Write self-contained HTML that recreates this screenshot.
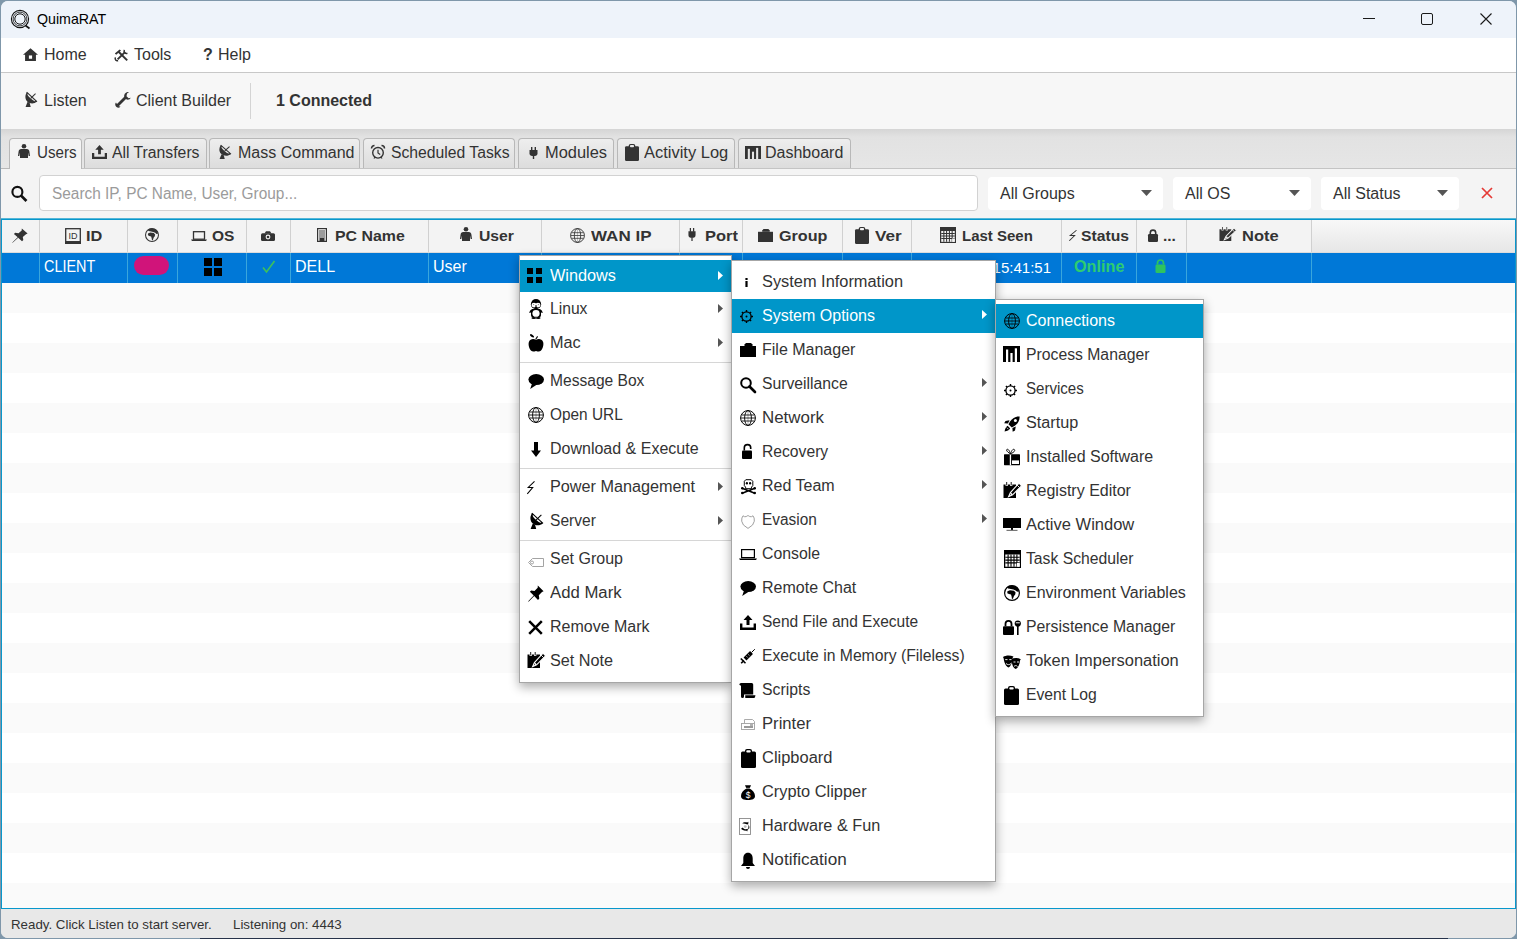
<!DOCTYPE html>
<html><head><meta charset="utf-8">
<style>
*{box-sizing:border-box;margin:0;padding:0}
html,body{width:1517px;height:939px;overflow:hidden;background:#7f97aa;font-family:"Liberation Sans",sans-serif;color:#333}
.a{position:absolute}
#win{position:absolute;left:0;top:0;width:1517px;height:939px;background:#f4f4f4;clip-path:inset(1px 1px 1px 1px round 7px)}
.t{position:absolute;white-space:nowrap;font-size:16px;line-height:1}
svg{position:absolute;overflow:visible}
</style></head><body>
<div class="a" style="left:200px;top:938px;width:1248px;height:1px;background:#26324a"></div>
<div id="win">
<div class="a" style="left:0px;top:0px;width:1517px;height:38px;background:#eef3fa"></div>
<svg style="left:10px;top:9px;" width="20" height="20" viewBox="0 0 20 20"><circle cx="10" cy="10" r="8.6" fill="none" stroke="#111" stroke-width="1.1"/><circle cx="10" cy="10" r="6.9" fill="none" stroke="#111" stroke-width="0.8"/><circle cx="10" cy="10" r="5.2" fill="none" stroke="#111" stroke-width="1"/><path d="M15.5 16.5L19.5 19.5" stroke="#111" stroke-width="1.6"/></svg>
<div class="t" style="left:37px;top:12.23px;font-size:14.2px;color:#000">QuimaRAT</div>
<div class="a" style="left:1363px;top:18px;width:12px;height:1px;background:#1a1a1a"></div>
<div class="a" style="left:1421px;top:13px;width:12px;height:12px;border:1.2px solid #1a1a1a;border-radius:2px"></div>
<svg style="left:1480px;top:13px;" width="12" height="12" viewBox="0 0 12 12"><path d="M0.5 0.5L11.5 11.5M11.5 0.5L0.5 11.5" stroke="#1a1a1a" stroke-width="1.1"/></svg>
<div class="a" style="left:0px;top:38px;width:1517px;height:34px;background:#fff"></div>
<div class="a" style="left:0px;top:72px;width:1517px;height:1px;background:#c8c8c8"></div>
<svg style="left:23px;top:48px" width="15" height="13" viewBox="0 0 16 14" preserveAspectRatio="none"><path d="M8 0.3L0 7.3h2.2V14h11.6V7.3H16z" fill="#333"/><rect x="6.3" y="8" width="3.4" height="3.6" fill="#fff"/></svg>
<div class="t" style="left:44px;top:47.0px;font-size:16px">Home</div>
<svg style="left:114px;top:49px" width="14" height="12" viewBox="0 0 14 12" preserveAspectRatio="none"><path d="M0.8 4.6L5.6 0.4 7 1.6 2.2 5.8z" fill="#333"/><path d="M4.6 2.8L13.2 11.4" stroke="#333" stroke-width="2"/><path d="M11.2 2.8L3.6 10.4" stroke="#333" stroke-width="1.9"/><path d="M10.4 0.9a2.4 2.4 0 0 0 3 3.4" stroke="#333" stroke-width="1.5" fill="none"/><path d="M1.5 8.4a2.2 2.2 0 0 0 2.6 3.2" stroke="#333" stroke-width="1.5" fill="none"/></svg>
<div class="t" style="left:134px;top:47.0px;font-size:16px">Tools</div>
<div class="t" style="left:203px;top:47.0px;font-size:16px;color:#333;font-weight:bold">?</div>
<div class="t" style="left:218px;top:47.0px;font-size:16px">Help</div>
<div class="a" style="left:0px;top:73px;width:1517px;height:56px;background:#f7f7f7"></div>
<svg style="left:25px;top:92px" width="12" height="15" viewBox="0 0 13 16" preserveAspectRatio="none"><path d="M2 0.3C-0.8 4.3 0 9.8 4.8 11.8 7.8 12.9 10.8 12.2 12.9 10.2z" fill="#333"/><ellipse cx="7" cy="5.7" rx="5.6" ry="1.5" transform="rotate(43 7 5.7)" fill="#f7f7f7"/><path d="M1.8 0.2L13 10.4" stroke="#333" stroke-width="1.1"/><path d="M6.2 6.8L11.4 1.8" stroke="#333" stroke-width="1.1"/><path d="M2.8 10.5L0.6 16h5.6L5 11.5" fill="#333"/></svg>
<div class="t" style="left:44px;top:93.0px;font-size:16px">Listen</div>
<svg style="left:115px;top:92px" width="16" height="16" viewBox="0 0 16 16" preserveAspectRatio="none"><path d="M2.5 13.5L10.5 5.5" stroke="#333" stroke-width="2.8"/><path d="M9.2 3.2a3.8 3.8 0 0 0 3.6 4.6 3.6 3.6 0 0 0 3-2L13.6 6.2 11.5 4.2 12 1.4 14 .2a3.8 3.8 0 0 0-4.8 3z" fill="#333"/><path d="M1 10.5a3 3 0 0 0 .5 4.5 3 3 0 0 0 4-.5l-1.8-.2-1.3-1.6z" fill="#333"/></svg>
<div class="t" style="left:136px;top:93.0px;font-size:16px">Client Builder</div>
<div class="a" style="left:250px;top:83px;width:1px;height:36px;background:#d4d4d4"></div>
<div class="t" style="left:276px;top:93.0px;font-size:16px;color:#333;font-weight:bold">1 Connected</div>
<div class="a" style="left:0px;top:129px;width:1517px;height:40px;background:linear-gradient(#d5d5d5 0px,#e2e2e2 8px,#e6e6e6 100%)"></div>
<div class="a" style="left:9px;top:138px;width:73px;height:31px;background:#f4f4f4;border:1px solid #b8b8b8;border-bottom:none;border-radius:4px 4px 0 0"></div>
<div class="t" style="left:37px;top:145.0px;font-size:16px;transform:scaleX(0.9454);transform-origin:0 0">Users</div>
<div class="a" style="left:84px;top:138px;width:123px;height:31px;background:linear-gradient(#eeeeee,#dcdcdc);border:1px solid #b8b8b8;border-bottom:none;border-radius:4px 4px 0 0"></div>
<div class="t" style="left:112px;top:145.0px;font-size:16px;transform:scaleX(0.9840);transform-origin:0 0">All Transfers</div>
<div class="a" style="left:209px;top:138px;width:151px;height:31px;background:linear-gradient(#eeeeee,#dcdcdc);border:1px solid #b8b8b8;border-bottom:none;border-radius:4px 4px 0 0"></div>
<div class="t" style="left:238px;top:145.0px;font-size:16px">Mass Command</div>
<div class="a" style="left:363px;top:138px;width:152px;height:31px;background:linear-gradient(#eeeeee,#dcdcdc);border:1px solid #b8b8b8;border-bottom:none;border-radius:4px 4px 0 0"></div>
<div class="t" style="left:391px;top:145.0px;font-size:16px;transform:scaleX(0.9820);transform-origin:0 0">Scheduled Tasks</div>
<div class="a" style="left:518px;top:138px;width:96px;height:31px;background:linear-gradient(#eeeeee,#dcdcdc);border:1px solid #b8b8b8;border-bottom:none;border-radius:4px 4px 0 0"></div>
<div class="t" style="left:545px;top:145.0px;font-size:16px;transform:scaleX(1.0251);transform-origin:0 0">Modules</div>
<div class="a" style="left:617px;top:138px;width:118px;height:31px;background:linear-gradient(#eeeeee,#dcdcdc);border:1px solid #b8b8b8;border-bottom:none;border-radius:4px 4px 0 0"></div>
<div class="t" style="left:644px;top:145.0px;font-size:16px;transform:scaleX(1.0292);transform-origin:0 0">Activity Log</div>
<div class="a" style="left:738px;top:138px;width:113px;height:31px;background:linear-gradient(#eeeeee,#dcdcdc);border:1px solid #b8b8b8;border-bottom:none;border-radius:4px 4px 0 0"></div>
<div class="t" style="left:765px;top:145.0px;font-size:16px">Dashboard</div>
<div class="a" style="left:0px;top:168px;width:9px;height:1px;background:#b8b8b8"></div>
<div class="a" style="left:82px;top:168px;width:1435px;height:1px;background:#c4c4c4"></div>
<svg style="left:18px;top:144px" width="12" height="14" viewBox="0 0 12 14" preserveAspectRatio="none"><circle cx="6" cy="2.3" r="2.3" fill="#333"/><path d="M3.2 5h5.6c1.6 0 2.4 1 2.6 2.5L12 12h-1.3l-.7-3.5V14H2V8.5L1.3 12H0l.6-4.5C.8 6 1.6 5 3.2 5z" fill="#333"/></svg>
<svg style="left:92px;top:145px" width="15" height="14" viewBox="0 0 16 15" preserveAspectRatio="none"><path d="M8 0L3.5 5h3v5h3V5h3z" fill="#333"/><path d="M1.2 8.5v5.3h13.6V8.5" stroke="#333" stroke-width="2.4" fill="none"/></svg>
<svg style="left:219px;top:145px" width="12" height="14" viewBox="0 0 13 16" preserveAspectRatio="none"><path d="M2 0.3C-0.8 4.3 0 9.8 4.8 11.8 7.8 12.9 10.8 12.2 12.9 10.2z" fill="#333"/><ellipse cx="7" cy="5.7" rx="5.6" ry="1.5" transform="rotate(43 7 5.7)" fill="#e6e6e6"/><path d="M1.8 0.2L13 10.4" stroke="#333" stroke-width="1.1"/><path d="M6.2 6.8L11.4 1.8" stroke="#333" stroke-width="1.1"/><path d="M2.8 10.5L0.6 16h5.6L5 11.5" fill="#333"/></svg>
<svg style="left:371px;top:145px" width="14" height="14" viewBox="0 0 14 14" preserveAspectRatio="none"><circle cx="7" cy="7.8" r="5.3" fill="none" stroke="#333" stroke-width="1.4"/><path d="M7 4.8V8l2.2 1.5" stroke="#333" stroke-width="1.2" fill="none"/><path d="M0.5 3.5a3 3 0 0 1 3-3M13.5 3.5a3 3 0 0 0-3-3" stroke="#333" stroke-width="1.5" fill="none"/><path d="M3 13.5l1-1.5M11 13.5l-1-1.5" stroke="#333" stroke-width="1.2"/></svg>
<svg style="left:529px;top:147px" width="9" height="12" viewBox="0 0 9 12" preserveAspectRatio="none"><rect x="2" y="0" width="1.4" height="3.5" fill="#333"/><rect x="5.6" y="0" width="1.4" height="3.5" fill="#333"/><path d="M0.5 3h8v3.5c0 1.6-1.1 2.5-2.6 2.5H3.1C1.6 9 .5 8.1.5 6.5z" fill="#333"/><rect x="3.8" y="8.5" width="1.4" height="3.5" fill="#333"/></svg>
<svg style="left:625px;top:144px" width="14" height="17" viewBox="0 0 15 19" preserveAspectRatio="none"><rect x="0" y="2.5" width="15" height="16.5" rx="1.5" fill="#333"/><path d="M4 4V2a2 2 0 0 1 2-2h3a2 2 0 0 1 2 2v2z" fill="#333"/><rect x="5.3" y="1.2" width="4.4" height="2.3" rx="1" fill="#e6e6e6"/></svg>
<svg style="left:745px;top:146px" width="16" height="13" viewBox="0 0 17 16" preserveAspectRatio="none"><rect x="0" y="0" width="17" height="16" fill="#333"/><rect x="3" y="3.5" width="2.2" height="12.5" fill="#e6e6e6"/><rect x="7.4" y="7" width="2.2" height="9" fill="#e6e6e6"/><rect x="11.8" y="2.3" width="2.2" height="13.7" fill="#e6e6e6"/></svg>
<svg style="left:10px;top:185px;" width="18" height="17" viewBox="0 0 16 16"><circle cx="6.5" cy="6.5" r="4.7" fill="none" stroke="#111" stroke-width="2"/><path d="M10 10l5 5" stroke="#111" stroke-width="2.6"/></svg>
<div class="a" style="left:39px;top:175px;width:939px;height:36px;background:#fff;border:1px solid #d2d2d2;border-radius:4px"></div>
<div class="t" style="left:52px;top:186.0px;font-size:16px;color:#9b9b9b;transform:scaleX(0.9619);transform-origin:0 0">Search IP, PC Name, User, Group...</div>
<div class="a" style="left:988px;top:177px;width:175px;height:33px;background:#fff;border-radius:4px"></div>
<div class="t" style="left:1000px;top:186.0px;font-size:16px;color:#333">All Groups</div>
<svg style="left:1141px;top:190px;" width="11" height="6" viewBox="0 0 11 6"><path d="M0 0h11L5.5 6z" fill="#555"/></svg>
<div class="a" style="left:1173px;top:177px;width:138px;height:33px;background:#fff;border-radius:4px"></div>
<div class="t" style="left:1185px;top:186.0px;font-size:16px;color:#333">All OS</div>
<svg style="left:1289px;top:190px;" width="11" height="6" viewBox="0 0 11 6"><path d="M0 0h11L5.5 6z" fill="#555"/></svg>
<div class="a" style="left:1321px;top:177px;width:138px;height:33px;background:#fff;border-radius:4px"></div>
<div class="t" style="left:1333px;top:186.0px;font-size:16px;color:#333">All Status</div>
<svg style="left:1437px;top:190px;" width="11" height="6" viewBox="0 0 11 6"><path d="M0 0h11L5.5 6z" fill="#555"/></svg>
<svg style="left:1481px;top:187px;" width="12" height="12" viewBox="0 0 12 12"><path d="M1 1L11 11M11 1L1 11" stroke="#e53935" stroke-width="1.7"/></svg>
<div class="a" style="left:1px;top:219px;width:1515px;height:690px;background:#fff;border:1px solid #0797cc;box-shadow:0 -1px 0 0 rgba(3,150,201,0.55), 0 0 0 1px rgba(3,150,201,0.25)"></div>
<div class="a" style="left:2px;top:220px;width:1513px;height:33px;background:#f3f3f3"></div>
<div class="a" style="left:1311px;top:220px;width:204px;height:33px;background:linear-gradient(#f8f8f8,#e6e6e6)"></div>
<div class="a" style="left:39px;top:220px;width:1px;height:33px;background:#d0d0d0"></div>
<div class="a" style="left:127px;top:220px;width:1px;height:33px;background:#d0d0d0"></div>
<div class="a" style="left:177px;top:220px;width:1px;height:33px;background:#d0d0d0"></div>
<div class="a" style="left:246px;top:220px;width:1px;height:33px;background:#d0d0d0"></div>
<div class="a" style="left:290px;top:220px;width:1px;height:33px;background:#d0d0d0"></div>
<div class="a" style="left:428px;top:220px;width:1px;height:33px;background:#d0d0d0"></div>
<div class="a" style="left:541px;top:220px;width:1px;height:33px;background:#d0d0d0"></div>
<div class="a" style="left:679px;top:220px;width:1px;height:33px;background:#d0d0d0"></div>
<div class="a" style="left:742px;top:220px;width:1px;height:33px;background:#d0d0d0"></div>
<div class="a" style="left:842px;top:220px;width:1px;height:33px;background:#d0d0d0"></div>
<div class="a" style="left:911px;top:220px;width:1px;height:33px;background:#d0d0d0"></div>
<div class="a" style="left:1061px;top:220px;width:1px;height:33px;background:#d0d0d0"></div>
<div class="a" style="left:1136px;top:220px;width:1px;height:33px;background:#d0d0d0"></div>
<div class="a" style="left:1186px;top:220px;width:1px;height:33px;background:#d0d0d0"></div>
<div class="a" style="left:1311px;top:220px;width:1px;height:33px;background:#d0d0d0"></div>
<div class="a" style="left:2px;top:252px;width:1513px;height:1px;background:#dcdcdc"></div>
<div class="a" style="left:2px;top:283px;width:1513px;height:30px;background:#fafafa"></div>
<div class="a" style="left:2px;top:343px;width:1513px;height:30px;background:#fafafa"></div>
<div class="a" style="left:2px;top:403px;width:1513px;height:30px;background:#fafafa"></div>
<div class="a" style="left:2px;top:463px;width:1513px;height:30px;background:#fafafa"></div>
<div class="a" style="left:2px;top:523px;width:1513px;height:30px;background:#fafafa"></div>
<div class="a" style="left:2px;top:583px;width:1513px;height:30px;background:#fafafa"></div>
<div class="a" style="left:2px;top:643px;width:1513px;height:30px;background:#fafafa"></div>
<div class="a" style="left:2px;top:703px;width:1513px;height:30px;background:#fafafa"></div>
<div class="a" style="left:2px;top:763px;width:1513px;height:30px;background:#fafafa"></div>
<div class="a" style="left:2px;top:823px;width:1513px;height:30px;background:#fafafa"></div>
<div class="a" style="left:2px;top:883px;width:1513px;height:25px;background:#fafafa"></div>
<div class="a" style="left:2px;top:253px;width:1513px;height:30px;background:#0078d7"></div>
<div class="a" style="left:39px;top:253px;width:1px;height:30px;background:#3aa6dc"></div>
<div class="a" style="left:127px;top:253px;width:1px;height:30px;background:#3aa6dc"></div>
<div class="a" style="left:177px;top:253px;width:1px;height:30px;background:#3aa6dc"></div>
<div class="a" style="left:246px;top:253px;width:1px;height:30px;background:#3aa6dc"></div>
<div class="a" style="left:290px;top:253px;width:1px;height:30px;background:#3aa6dc"></div>
<div class="a" style="left:428px;top:253px;width:1px;height:30px;background:#3aa6dc"></div>
<div class="a" style="left:541px;top:253px;width:1px;height:30px;background:#3aa6dc"></div>
<div class="a" style="left:679px;top:253px;width:1px;height:30px;background:#3aa6dc"></div>
<div class="a" style="left:742px;top:253px;width:1px;height:30px;background:#3aa6dc"></div>
<div class="a" style="left:842px;top:253px;width:1px;height:30px;background:#3aa6dc"></div>
<div class="a" style="left:911px;top:253px;width:1px;height:30px;background:#3aa6dc"></div>
<div class="a" style="left:1061px;top:253px;width:1px;height:30px;background:#3aa6dc"></div>
<div class="a" style="left:1136px;top:253px;width:1px;height:30px;background:#3aa6dc"></div>
<div class="a" style="left:1186px;top:253px;width:1px;height:30px;background:#3aa6dc"></div>
<div class="a" style="left:1311px;top:253px;width:1px;height:30px;background:#3aa6dc"></div>
<svg style="left:12px;top:228px" width="16" height="15" viewBox="0 0 16 17" preserveAspectRatio="none"><path d="M9.8 0.5L15.6 6.3 14 7.1 10.8 10.3 11.3 13.6 10 14.9 6.2 11.1 0.6 16.7 0.2 16.3 5.7 10.6 1.9 6.8 3.2 5.5 6.5 6 9.7 2.8z" fill="#333"/></svg>
<svg style="left:65px;top:228px;" width="16" height="16" viewBox="0 0 16 16"><rect x="0.7" y="0.7" width="14.6" height="13" fill="none" stroke="#333" stroke-width="1.3"/><rect x="0" y="13.5" width="16" height="2.5" fill="#333"/><text x="8" y="11" font-size="9" font-family="Liberation Sans" fill="#333" text-anchor="middle">ID</text></svg>
<div class="t" style="left:86px;top:228.06px;font-size:15.5px;color:#333;font-weight:bold;transform:scaleX(1.0516);transform-origin:0 0">ID</div>
<svg style="left:145px;top:228px" width="14" height="14" viewBox="0 0 16 16" preserveAspectRatio="none"><circle cx="8" cy="8" r="7.4" fill="none" stroke="#333" stroke-width="1.2"/><path d="M3.2 2C6 -.2 11.3 .2 14 3.3L15 6.2 13.2 6.8 11.6 5.4 9.4 4.6 5.6 3.8 4 3.4z" fill="#333"/><path d="M3.4 6.2L6 5.2 10 5.7 11.6 7.4 11.2 9.5 10 10.9 9 13.6 8 14.2 7.6 11.6 7 9.6 5 9.1 3.3 8.2z" fill="#333"/></svg>
<svg style="left:191px;top:231px;" width="16" height="10" viewBox="0 0 16 10"><rect x="2.5" y="0.7" width="11" height="7.5" fill="none" stroke="#333" stroke-width="1.3"/><path d="M0 8.5h16l-1 1.5H1z" fill="#333"/></svg>
<div class="t" style="left:212px;top:228.06px;font-size:15.5px;color:#333;font-weight:bold">OS</div>
<svg style="left:261px;top:231px;" width="14" height="10" viewBox="0 0 14 10"><rect x="0" y="2.2" width="14" height="7.8" rx="1.5" fill="#333"/><path d="M3.5 2.5L5 0.3h4l1.5 2.2z" fill="#333"/><circle cx="7" cy="6" r="2.4" fill="#f3f3f3"/><circle cx="7" cy="6" r="1.3" fill="#333"/></svg>
<svg style="left:317px;top:228px;" width="10" height="14" viewBox="0 0 10 14"><rect x="0.6" y="0.6" width="8.8" height="12.8" fill="none" stroke="#333" stroke-width="1.2"/><path d="M2 3h6M2 5h6M2 7h6M2 9h6" stroke="#333" stroke-width="0.9"/><rect x="2.5" y="10" width="5" height="3.5" fill="#333"/></svg>
<div class="t" style="left:335px;top:228.06px;font-size:15.5px;color:#333;font-weight:bold;transform:scaleX(1.0255);transform-origin:0 0">PC Name</div>
<svg style="left:460px;top:227px" width="12" height="14" viewBox="0 0 12 14" preserveAspectRatio="none"><circle cx="6" cy="2.3" r="2.3" fill="#333"/><path d="M3.2 5h5.6c1.6 0 2.4 1 2.6 2.5L12 12h-1.3l-.7-3.5V14H2V8.5L1.3 12H0l.6-4.5C.8 6 1.6 5 3.2 5z" fill="#333"/></svg>
<div class="t" style="left:479px;top:228.06px;font-size:15.5px;color:#333;font-weight:bold;transform:scaleX(1.0154);transform-origin:0 0">User</div>
<svg style="left:570px;top:228px" width="15" height="15" viewBox="0 0 16 16" preserveAspectRatio="none"><circle cx="8" cy="8" r="7.4" fill="none" stroke="#333" stroke-width="1"/><ellipse cx="8" cy="8" rx="3.4" ry="7.4" fill="none" stroke="#333" stroke-width="0.9"/><path d="M0.8 8h14.4M1.8 5h12.4M1.8 11h12.4" stroke="#333" stroke-width="0.85"/><path d="M8 0.6v14.8" stroke="#333" stroke-width="0.5" opacity="0.6"/></svg>
<div class="t" style="left:591px;top:228.06px;font-size:15.5px;color:#333;font-weight:bold;transform:scaleX(1.0975);transform-origin:0 0">WAN IP</div>
<svg style="left:688px;top:228px" width="8" height="13" viewBox="0 0 9 12" preserveAspectRatio="none"><rect x="2" y="0" width="1.4" height="3.5" fill="#333"/><rect x="5.6" y="0" width="1.4" height="3.5" fill="#333"/><path d="M0.5 3h8v3.5c0 1.6-1.1 2.5-2.6 2.5H3.1C1.6 9 .5 8.1.5 6.5z" fill="#333"/><rect x="3.8" y="8.5" width="1.4" height="3.5" fill="#333"/></svg>
<div class="t" style="left:705px;top:228.06px;font-size:15.5px;color:#333;font-weight:bold;transform:scaleX(1.0613);transform-origin:0 0">Port</div>
<svg style="left:758px;top:229px" width="15" height="13" viewBox="0 0 16 14" preserveAspectRatio="none"><rect x="0" y="3" width="16" height="11" fill="#333"/><rect x="5.5" y="0" width="6" height="2" fill="#333"/><rect x="4.5" y="1" width="8" height="2" fill="#333"/></svg>
<div class="t" style="left:779px;top:228.06px;font-size:15.5px;color:#333;font-weight:bold;transform:scaleX(1.0430);transform-origin:0 0">Group</div>
<svg style="left:855px;top:227px" width="14" height="17" viewBox="0 0 15 19" preserveAspectRatio="none"><rect x="0" y="2.5" width="15" height="16.5" rx="1.5" fill="#333"/><path d="M4 4V2a2 2 0 0 1 2-2h3a2 2 0 0 1 2 2v2z" fill="#333"/><rect x="5.3" y="1.2" width="4.4" height="2.3" rx="1" fill="#f3f3f3"/></svg>
<div class="t" style="left:875px;top:228.06px;font-size:15.5px;color:#333;font-weight:bold;transform:scaleX(1.1060);transform-origin:0 0">Ver</div>
<svg style="left:940px;top:227px" width="16" height="16" viewBox="0 0 17 18" preserveAspectRatio="none"><rect x="0" y="0" width="17" height="18" fill="#333"/><rect x="1.3" y="4.5" width="14.4" height="12.2" fill="#f3f3f3"/><path d="M1.3 7.3h14.4M1.3 10.1h14.4M1.3 12.9h14.4M4.1 4.5v12.2M7 4.5v12.2M10 4.5v12.2M12.9 4.5v12.2" stroke="#333" stroke-width="1.1"/><rect x="12.9" y="12.9" width="2.8" height="3.8" fill="#f3f3f3"/></svg>
<div class="t" style="left:962px;top:228.06px;font-size:15.5px;color:#333;font-weight:bold;transform:scaleX(0.9668);transform-origin:0 0">Last Seen</div>
<svg style="left:1069px;top:230px" width="8" height="11" viewBox="0 0 8 13" preserveAspectRatio="none"><path d="M7.5 0.3L1.2 6.5h4.5L0.3 12.8" fill="none" stroke="#333" stroke-width="1.05"/></svg>
<div class="t" style="left:1081px;top:228.06px;font-size:15.5px;color:#333;font-weight:bold;transform:scaleX(1.0132);transform-origin:0 0">Status</div>
<svg style="left:1148px;top:229px;" width="10" height="13" viewBox="0 0 10 13"><rect x="0" y="5" width="10" height="8" rx="1.3" fill="#333"/><path d="M2.3 5.5V3.8a2.7 2.7 0 0 1 5.4 0v1.7" stroke="#333" stroke-width="1.6" fill="none"/></svg>
<div class="t" style="left:1163px;top:228.06px;font-size:15.5px;color:#333;font-weight:bold">...</div>
<svg style="left:1219px;top:227px" width="17" height="14" viewBox="0 0 18 16" preserveAspectRatio="none"><path d="M0.5 2.5h12.5V16H0.5z" fill="#333"/><path d="M3.7 0.3v3.6M8.2 0.3v3.6" stroke="#f3f3f3" stroke-width="2.2"/><path d="M3.7 0v3.4M8.2 0v3.4" stroke="#333" stroke-width="0.9"/><path d="M16 1.2L18.6 3.8 9.6 12.8 5.6 14.6 7.4 10.6z" fill="#333" stroke="#f3f3f3" stroke-width="1.1"/><path d="M14.2 3.2l2.4 2.4" stroke="#f3f3f3" stroke-width="0.9"/><path d="M7.6 11.2L9 12.6" stroke="#f3f3f3" stroke-width="1.5"/></svg>
<div class="t" style="left:1242px;top:228.06px;font-size:15.5px;color:#333;font-weight:bold;transform:scaleX(1.0623);transform-origin:0 0">Note</div>
<div class="t" style="left:44px;top:259.0px;font-size:16px;color:#fff;transform:scaleX(0.8997);transform-origin:0 0">CLIENT</div>
<div class="a" style="left:134px;top:256px;width:35px;height:19px;background:#d0147a;border-radius:10px"></div>
<svg style="left:204px;top:258px;" width="18" height="18" viewBox="0 0 18 18"><rect x="0" y="0" width="8" height="8" fill="#000"/><rect x="10" y="0" width="8" height="8" fill="#000"/><rect x="0" y="10" width="8" height="8" fill="#000"/><rect x="10" y="10" width="8" height="8" fill="#000"/></svg>
<svg style="left:262px;top:260px;" width="13" height="13" viewBox="0 0 13 13"><path d="M1 7.5L4.5 12 12.5 1" fill="none" stroke="#3ec15a" stroke-width="1.6"/></svg>
<div class="t" style="left:295px;top:259.0px;font-size:16px;color:#fff">DELL</div>
<div class="t" style="left:433px;top:259.0px;font-size:16px;color:#fff">User</div>
<div class="a" style="left:912px;top:253px;width:149px;height:30px;overflow:hidden"><div class="t" style="right:10px;top:7px;color:#fff;font-size:15px">2025-01-01 15:41:51</div></div>
<div class="t" style="left:1074px;top:259.0px;font-size:16px;color:#2ecc71;font-weight:bold;transform:scaleX(1.0124);transform-origin:0 0">Online</div>
<svg style="left:1155px;top:259px;" width="11" height="14" viewBox="0 0 11 14"><rect x="0.5" y="5.5" width="10" height="8.5" rx="1.3" fill="#2ec35f"/><path d="M2.5 5.5V4a3 3 0 0 1 6 0v1.5" stroke="#2ec35f" stroke-width="1.7" fill="none"/></svg>
<div class="a" style="left:0px;top:909px;width:1517px;height:30px;background:#e8e8e8"></div>
<div class="t" style="left:11px;top:918.34px;font-size:13.3px;color:#333">Ready. Click Listen to start server.</div>
<div class="t" style="left:233px;top:918.34px;font-size:13.3px;color:#333">Listening on: 4443</div>
<div class="a" style="left:519px;top:255px;width:213px;height:428px;background:#fff;border:1px solid #a6a6a6;box-shadow:0 4px 10px rgba(0,0,0,0.33)"></div>
<div class="a" style="left:520px;top:260px;width:211px;height:32px;background:#0096c9"></div>
<svg style="left:527px;top:268px" width="15" height="15" viewBox="0 0 15 15" preserveAspectRatio="none"><rect x="0" y="0" width="6" height="6" fill="#000"/><rect x="9" y="0" width="6" height="6" fill="#000"/><rect x="0" y="9" width="6" height="6" fill="#000"/><rect x="9" y="9" width="6" height="6" fill="#000"/></svg>
<div class="t" style="left:550px;top:268.0px;font-size:16px;color:#fff;transform:scaleX(1.0169);transform-origin:0 0">Windows</div>
<svg style="left:718px;top:271px;" width="5" height="9" viewBox="0 0 5 9"><path d="M0 0L5 4.5 0 9z" fill="#fff"/></svg>
<svg style="left:529px;top:299px" width="14" height="20" viewBox="0 0 14 20" preserveAspectRatio="none"><circle cx="7" cy="5.2" r="5.1" fill="#000"/><ellipse cx="5" cy="6.1" rx="2.5" ry="2.3" fill="#fff"/><ellipse cx="9" cy="6.1" rx="2.5" ry="2.3" fill="#fff"/><path d="M5.8 6.4h2.4L7 8.3z" fill="#000"/><circle cx="4.6" cy="5.6" r="0.7" fill="#888"/><circle cx="9.4" cy="5.6" r="0.7" fill="#888"/><path d="M3.2 10C1.5 10.8.6 12 .2 14L2 13.6V16c0 1.5.8 2.3 2.2 2.3h5.6c1.4 0 2.2-.8 2.2-2.3v-2.4l1.8.4c-.4-2-1.3-3.2-3-4z" fill="#000"/><ellipse cx="7" cy="14.4" rx="3.6" ry="3.4" fill="#fff"/><ellipse cx="4.8" cy="18.9" rx="2.4" ry="1" fill="#000"/><ellipse cx="9.2" cy="18.9" rx="2.4" ry="1" fill="#000"/></svg>
<div class="t" style="left:550px;top:301.0px;font-size:16px;color:#333;transform:scaleX(0.9778);transform-origin:0 0">Linux</div>
<svg style="left:718px;top:304px;" width="5" height="9" viewBox="0 0 5 9"><path d="M0 0L5 4.5 0 9z" fill="#555"/></svg>
<svg style="left:528px;top:334px" width="16" height="18" viewBox="0 0 16 18" preserveAspectRatio="none"><path d="M8 6C6.2 4.6 2.2 4.4 0.9 8 0 10.8 1.3 15 3.2 16.8 4.5 18 6 17.6 8 17 10 17.6 11.5 18 12.8 16.8 14.7 15 16 10.8 15.1 8 13.8 4.4 9.8 4.6 8 6z" fill="#000"/><ellipse cx="4" cy="1.8" rx="2.4" ry="1.1" transform="rotate(35 4 1.8)" fill="#000"/><path d="M7.6 5.5L9.6 2.4" stroke="#000" stroke-width="1.1"/></svg>
<div class="t" style="left:550px;top:335.0px;font-size:16px;color:#333;transform:scaleX(1.0154);transform-origin:0 0">Mac</div>
<svg style="left:718px;top:338px;" width="5" height="9" viewBox="0 0 5 9"><path d="M0 0L5 4.5 0 9z" fill="#555"/></svg>
<div class="a" style="left:520px;top:362px;width:211px;height:1px;background:#d6d6d6"></div>
<svg style="left:528px;top:374px" width="16" height="15" viewBox="0 0 16 15" preserveAspectRatio="none"><ellipse cx="8.2" cy="5.6" rx="7.8" ry="5.5" fill="#000"/><path d="M4 9.5L2.2 15 9 10.5z" fill="#000"/></svg>
<div class="t" style="left:550px;top:373.0px;font-size:16px;color:#333;transform:scaleX(0.9738);transform-origin:0 0">Message Box</div>
<svg style="left:528px;top:407px" width="16" height="16" viewBox="0 0 16 16" preserveAspectRatio="none"><circle cx="8" cy="8" r="7.4" fill="none" stroke="#000" stroke-width="1"/><ellipse cx="8" cy="8" rx="3.4" ry="7.4" fill="none" stroke="#000" stroke-width="0.9"/><path d="M0.8 8h14.4M1.8 5h12.4M1.8 11h12.4" stroke="#000" stroke-width="0.85"/><path d="M8 0.6v14.8" stroke="#000" stroke-width="0.5" opacity="0.6"/></svg>
<div class="t" style="left:550px;top:407.0px;font-size:16px;color:#333;transform:scaleX(0.9617);transform-origin:0 0">Open URL</div>
<svg style="left:531px;top:442px" width="10" height="15" viewBox="0 0 10 15" preserveAspectRatio="none"><path d="M3 0h4v8.5h3L5 15 0 8.5h3z" fill="#000"/></svg>
<div class="t" style="left:550px;top:441.0px;font-size:16px;color:#333">Download &amp; Execute</div>
<div class="a" style="left:520px;top:468px;width:211px;height:1px;background:#d6d6d6"></div>
<svg style="left:527px;top:481px" width="8" height="13" viewBox="0 0 8 13" preserveAspectRatio="none"><path d="M7.5 0.3L1.2 6.5h4.5L0.3 12.8" fill="none" stroke="#000" stroke-width="1.05"/></svg>
<div class="t" style="left:550px;top:479.0px;font-size:16px;color:#333;transform:scaleX(1.0134);transform-origin:0 0">Power Management</div>
<svg style="left:718px;top:482px;" width="5" height="9" viewBox="0 0 5 9"><path d="M0 0L5 4.5 0 9z" fill="#555"/></svg>
<svg style="left:530px;top:513px" width="13" height="16" viewBox="0 0 13 16" preserveAspectRatio="none"><path d="M2 0.3C-0.8 4.3 0 9.8 4.8 11.8 7.8 12.9 10.8 12.2 12.9 10.2z" fill="#000"/><ellipse cx="7" cy="5.7" rx="5.6" ry="1.5" transform="rotate(43 7 5.7)" fill="#fff"/><path d="M1.8 0.2L13 10.4" stroke="#000" stroke-width="1.1"/><path d="M6.2 6.8L11.4 1.8" stroke="#000" stroke-width="1.1"/><path d="M2.8 10.5L0.6 16h5.6L5 11.5" fill="#000"/></svg>
<div class="t" style="left:550px;top:513.0px;font-size:16px;color:#333;transform:scaleX(0.9740);transform-origin:0 0">Server</div>
<svg style="left:718px;top:516px;" width="5" height="9" viewBox="0 0 5 9"><path d="M0 0L5 4.5 0 9z" fill="#555"/></svg>
<div class="a" style="left:520px;top:540px;width:211px;height:1px;background:#d6d6d6"></div>
<svg style="left:528px;top:558px" width="16" height="9" viewBox="0 0 16 9" preserveAspectRatio="none"><path d="M4.5 0.5h11v8h-11L0.5 4.5z" fill="none" stroke="#9a9a9a" stroke-width="0.9"/><circle cx="4" cy="4.5" r="1.5" fill="none" stroke="#9a9a9a" stroke-width="0.9"/></svg>
<div class="t" style="left:550px;top:551.0px;font-size:16px;color:#333">Set Group</div>
<svg style="left:528px;top:585px" width="16" height="17" viewBox="0 0 16 17" preserveAspectRatio="none"><path d="M9.8 0.5L15.6 6.3 14 7.1 10.8 10.3 11.3 13.6 10 14.9 6.2 11.1 0.6 16.7 0.2 16.3 5.7 10.6 1.9 6.8 3.2 5.5 6.5 6 9.7 2.8z" fill="#000"/></svg>
<div class="t" style="left:550px;top:585.0px;font-size:16px;color:#333;transform:scaleX(1.0457);transform-origin:0 0">Add Mark</div>
<svg style="left:528px;top:620px" width="15" height="15" viewBox="0 0 15 15" preserveAspectRatio="none"><path d="M1.2 1.2L13.8 13.8M13.8 1.2L1.2 13.8" stroke="#000" stroke-width="2.5"/></svg>
<div class="t" style="left:550px;top:619.0px;font-size:16px;color:#333">Remove Mark</div>
<svg style="left:527px;top:652px" width="18" height="16" viewBox="0 0 18 16" preserveAspectRatio="none"><path d="M0.5 2.5h12.5V16H0.5z" fill="#000"/><path d="M3.7 0.3v3.6M8.2 0.3v3.6" stroke="#fff" stroke-width="2.2"/><path d="M3.7 0v3.4M8.2 0v3.4" stroke="#000" stroke-width="0.9"/><path d="M16 1.2L18.6 3.8 9.6 12.8 5.6 14.6 7.4 10.6z" fill="#000" stroke="#fff" stroke-width="1.1"/><path d="M14.2 3.2l2.4 2.4" stroke="#fff" stroke-width="0.9"/><path d="M7.6 11.2L9 12.6" stroke="#fff" stroke-width="1.5"/></svg>
<div class="t" style="left:550px;top:653.0px;font-size:16px;color:#333;transform:scaleX(1.0134);transform-origin:0 0">Set Note</div>
<div class="a" style="left:731px;top:260px;width:265px;height:622px;background:#fff;border:1px solid #a6a6a6;box-shadow:0 4px 10px rgba(0,0,0,0.33)"></div>
<svg style="left:745px;top:278px" width="3" height="9" viewBox="0 0 3 9" preserveAspectRatio="none"><rect x="0.4" y="3" width="2.2" height="6" fill="#000"/><rect x="0.4" y="0" width="2.2" height="2" fill="#000"/></svg>
<div class="t" style="left:762px;top:274.0px;font-size:16px;color:#333;transform:scaleX(1.0230);transform-origin:0 0">System Information</div>
<div class="a" style="left:732px;top:299px;width:263px;height:34px;background:#0096c9"></div>
<svg style="left:740px;top:310px" width="13" height="13" viewBox="0 0 13 13" preserveAspectRatio="none"><circle cx="6.5" cy="6.5" r="4.6" fill="none" stroke="#000" stroke-width="1.3"/><circle cx="6.5" cy="6.5" r="1" fill="#000"/><path d="M6.5 0v2M6.5 11v2M0 6.5h2M11 6.5h2M1.9 1.9l1.4 1.4M9.7 9.7l1.4 1.4M1.9 11.1l1.4-1.4M9.7 3.3l1.4-1.4" stroke="#000" stroke-width="1.4"/></svg>
<div class="t" style="left:762px;top:308.0px;font-size:16px;color:#fff">System Options</div>
<svg style="left:982px;top:310px;" width="5" height="9" viewBox="0 0 5 9"><path d="M0 0L5 4.5 0 9z" fill="#fff"/></svg>
<svg style="left:740px;top:343px" width="16" height="14" viewBox="0 0 16 14" preserveAspectRatio="none"><rect x="0" y="3" width="16" height="11" fill="#000"/><rect x="5.5" y="0" width="6" height="2" fill="#000"/><rect x="4.5" y="1" width="8" height="2" fill="#000"/></svg>
<div class="t" style="left:762px;top:342.0px;font-size:16px;color:#333">File Manager</div>
<svg style="left:740px;top:377px" width="16" height="16" viewBox="0 0 16 16" preserveAspectRatio="none"><circle cx="6" cy="6" r="4.8" fill="none" stroke="#000" stroke-width="2"/><path d="M9.5 9.5L15 15" stroke="#000" stroke-width="2.6" stroke-linecap="round"/></svg>
<div class="t" style="left:762px;top:376.0px;font-size:16px;color:#333;transform:scaleX(0.9833);transform-origin:0 0">Surveillance</div>
<svg style="left:982px;top:378px;" width="5" height="9" viewBox="0 0 5 9"><path d="M0 0L5 4.5 0 9z" fill="#555"/></svg>
<svg style="left:740px;top:410px" width="16" height="16" viewBox="0 0 16 16" preserveAspectRatio="none"><circle cx="8" cy="8" r="7.4" fill="none" stroke="#000" stroke-width="1"/><ellipse cx="8" cy="8" rx="3.4" ry="7.4" fill="none" stroke="#000" stroke-width="0.9"/><path d="M0.8 8h14.4M1.8 5h12.4M1.8 11h12.4" stroke="#000" stroke-width="0.85"/><path d="M8 0.6v14.8" stroke="#000" stroke-width="0.5" opacity="0.6"/></svg>
<div class="t" style="left:762px;top:410.0px;font-size:16px;color:#333;transform:scaleX(1.0564);transform-origin:0 0">Network</div>
<svg style="left:982px;top:412px;" width="5" height="9" viewBox="0 0 5 9"><path d="M0 0L5 4.5 0 9z" fill="#555"/></svg>
<svg style="left:742px;top:444px" width="11" height="15" viewBox="0 0 11 15" preserveAspectRatio="none"><rect x="0" y="6.5" width="10" height="8.5" rx="1" fill="#000"/><path d="M2.3 6.5V3.8a3.2 3.2 0 0 1 6.4 0V5" stroke="#000" stroke-width="1.6" fill="none"/></svg>
<div class="t" style="left:762px;top:444.0px;font-size:16px;color:#333;transform:scaleX(0.9796);transform-origin:0 0">Recovery</div>
<svg style="left:982px;top:446px;" width="5" height="9" viewBox="0 0 5 9"><path d="M0 0L5 4.5 0 9z" fill="#555"/></svg>
<svg style="left:741px;top:479px" width="15" height="15" viewBox="0 0 15 15" preserveAspectRatio="none"><path d="M4.8 0.7h5.4l1.6 1.6v4.3l-1.3 1.5v1.6H4.6V8.1L3.3 6.6V2.3z" fill="none" stroke="#000" stroke-width="1"/><ellipse cx="5.9" cy="4.3" rx="1.1" ry="1.3" fill="#000"/><ellipse cx="9.1" cy="4.3" rx="1.1" ry="1.3" fill="#000"/><path d="M1.2 9.2l12.6 5M13.8 9.2l-12.6 5" stroke="#000" stroke-width="1.5"/><circle cx="1.3" cy="9.3" r="1.3" fill="#000"/><circle cx="13.7" cy="9.3" r="1.3" fill="#000"/><circle cx="1.3" cy="14" r="1.3" fill="#000"/><circle cx="13.7" cy="14" r="1.3" fill="#000"/></svg>
<div class="t" style="left:762px;top:478.0px;font-size:16px;color:#333">Red Team</div>
<svg style="left:982px;top:480px;" width="5" height="9" viewBox="0 0 5 9"><path d="M0 0L5 4.5 0 9z" fill="#555"/></svg>
<svg style="left:741px;top:515px" width="14" height="14" viewBox="0 0 14 14" preserveAspectRatio="none"><path d="M2 0.8Q3.5 2.2 5.2 1.6Q6.2 0.6 7 0.7Q7.8 0.6 8.8 1.6Q10.5 2.2 12 0.8Q13.6 2.6 13.3 6.2Q13 10.2 7 13.4Q1 10.2 0.7 6.2Q0.4 2.6 2 0.8Z" fill="none" stroke="#9a9a9a" stroke-width="0.95"/></svg>
<div class="t" style="left:762px;top:512.0px;font-size:16px;color:#333;transform:scaleX(0.9627);transform-origin:0 0">Evasion</div>
<svg style="left:982px;top:514px;" width="5" height="9" viewBox="0 0 5 9"><path d="M0 0L5 4.5 0 9z" fill="#555"/></svg>
<svg style="left:739px;top:549px" width="18" height="11" viewBox="0 0 18 11" preserveAspectRatio="none"><rect x="2.6" y="0.6" width="12.8" height="8" fill="none" stroke="#000" stroke-width="1.2"/><path d="M0 9.5h18l-1 1.5H1z" fill="#000"/></svg>
<div class="t" style="left:762px;top:546.0px;font-size:16px;color:#333;transform:scaleX(0.9897);transform-origin:0 0">Console</div>
<svg style="left:740px;top:581px" width="16" height="15" viewBox="0 0 16 15" preserveAspectRatio="none"><ellipse cx="8.2" cy="5.6" rx="7.8" ry="5.5" fill="#000"/><path d="M4 9.5L2.2 15 9 10.5z" fill="#000"/></svg>
<div class="t" style="left:762px;top:580.0px;font-size:16px;color:#333">Remote Chat</div>
<svg style="left:740px;top:615px" width="16" height="15" viewBox="0 0 16 15" preserveAspectRatio="none"><path d="M8 0L3.5 5h3v5h3V5h3z" fill="#000"/><path d="M1.2 8.5v5.3h13.6V8.5" stroke="#000" stroke-width="2.4" fill="none"/></svg>
<div class="t" style="left:762px;top:614.0px;font-size:16px;color:#333;transform:scaleX(0.9702);transform-origin:0 0">Send File and Execute</div>
<svg style="left:740px;top:648px" width="15" height="16" viewBox="0 0 15 16" preserveAspectRatio="none"><path d="M11.5 4.5L5 11" stroke="#000" stroke-width="4"/><path d="M11.5 4.5L14.8 1.2" stroke="#000" stroke-width="1"/><path d="M0.8 10.5l4.7 4.7M1.2 15.2L4 12.4" stroke="#000" stroke-width="1.6"/><path d="M6.4 8.2l1.3 1.3M8.2 6.4l1.3 1.3" stroke="#fff" stroke-width="0.7"/></svg>
<div class="t" style="left:762px;top:648.0px;font-size:16px;color:#333;transform:scaleX(0.9826);transform-origin:0 0">Execute in Memory (Fileless)</div>
<svg style="left:739px;top:683px" width="17" height="15" viewBox="0 0 17 15" preserveAspectRatio="none"><path d="M2.5 0h10.2a1.5 1.5 0 0 1 1.5 1.5V11.5H5V13.5a1.5 1.5 0 0 1-3 0V2.5H1.2L.3 1.5C.5.5 1.5 0 2.5 0z" fill="#000"/><path d="M6.2 12.3h10.3l-.5 1.8a1 1 0 0 1-1 .9H6.3z" fill="#000"/></svg>
<div class="t" style="left:762px;top:682.0px;font-size:16px;color:#333;transform:scaleX(0.9876);transform-origin:0 0">Scripts</div>
<svg style="left:741px;top:719px" width="14" height="11" viewBox="0 0 14 11" preserveAspectRatio="none"><path d="M3.5 4V0.5h8l2 2V4" fill="none" stroke="#a0a0a0" stroke-width="0.9"/><rect x="0.5" y="4.5" width="13" height="6" fill="none" stroke="#a0a0a0" stroke-width="0.9"/><rect x="3" y="7" width="9" height="2" fill="#9a9a9a"/><rect x="9" y="5.5" width="3" height="1" fill="#666"/></svg>
<div class="t" style="left:762px;top:716.0px;font-size:16px;color:#333;transform:scaleX(1.0398);transform-origin:0 0">Printer</div>
<svg style="left:741px;top:749px" width="15" height="19" viewBox="0 0 15 19" preserveAspectRatio="none"><rect x="0" y="2.5" width="15" height="16.5" rx="1.5" fill="#000"/><path d="M4 4V2a2 2 0 0 1 2-2h3a2 2 0 0 1 2 2v2z" fill="#000"/><rect x="5.3" y="1.2" width="4.4" height="2.3" rx="1" fill="#fff"/></svg>
<div class="t" style="left:762px;top:750.0px;font-size:16px;color:#333;transform:scaleX(1.0280);transform-origin:0 0">Clipboard</div>
<svg style="left:741px;top:785px" width="14" height="15" viewBox="0 0 14 15" preserveAspectRatio="none"><path d="M4 0.3h6L8.6 3.5C11.8 5 14 8 14 11c0 3-2.8 4-7 4S0 14 0 11C0 8 2.2 5 5.4 3.5z" fill="#000"/><path d="M4.5 3.3h5" stroke="#fff" stroke-width="0.6"/><text x="7" y="12.8" font-size="8.5" font-family="Liberation Sans" fill="#fff" text-anchor="middle">$</text></svg>
<div class="t" style="left:762px;top:784.0px;font-size:16px;color:#333;transform:scaleX(1.0228);transform-origin:0 0">Crypto Clipper</div>
<svg style="left:739px;top:818px" width="12" height="17" viewBox="0 0 12 17" preserveAspectRatio="none"><rect x="0.5" y="0.5" width="11" height="16" fill="none" stroke="#8a8a8a" stroke-width="0.9"/><path d="M3.3 5.6C4 4.2 6 3.8 8.2 4.4L9.4 3.8 9.2 6.4 7.6 6.2C6.4 5.6 5 5.4 3.3 5.6z" fill="#000"/><path d="M9.8 7.2C10.6 8.2 10.6 10 9.8 11.4L9.2 10.2C9.6 9.4 9.6 8.4 9.3 7.6z" fill="#000"/><path d="M2 10.8L3.8 9.5C4.3 10.6 5.4 11.3 7 11.3L9 10.8 8.2 13.6 7.2 12.6C5 12.8 3.2 12 2 10.8z" fill="#000"/><circle cx="6.2" cy="8.6" r="1.4" fill="#bbb"/></svg>
<div class="t" style="left:762px;top:818.0px;font-size:16px;color:#333;transform:scaleX(1.0146);transform-origin:0 0">Hardware &amp; Fun</div>
<svg style="left:741px;top:852px" width="14" height="17" viewBox="0 0 14 17" preserveAspectRatio="none"><path d="M7 0.8C3.8 0.8 2.3 3.5 2.3 6.5V11L0 14h14l-2.3-3V6.5C11.7 3.5 10.2 0.8 7 0.8z" fill="#000"/><path d="M5 15a2 2 0 0 0 4 0z" fill="#000"/></svg>
<div class="t" style="left:762px;top:852.0px;font-size:16px;color:#333;transform:scaleX(1.0700);transform-origin:0 0">Notification</div>
<div class="a" style="left:995px;top:299px;width:209px;height:418px;background:#fff;border:1px solid #a6a6a6;box-shadow:0 4px 10px rgba(0,0,0,0.33)"></div>
<div class="a" style="left:996px;top:304px;width:207px;height:34px;background:#0096c9"></div>
<svg style="left:1004px;top:313px" width="16" height="16" viewBox="0 0 16 16" preserveAspectRatio="none"><circle cx="8" cy="8" r="7.4" fill="none" stroke="#000" stroke-width="1"/><ellipse cx="8" cy="8" rx="3.4" ry="7.4" fill="none" stroke="#000" stroke-width="0.9"/><path d="M0.8 8h14.4M1.8 5h12.4M1.8 11h12.4" stroke="#000" stroke-width="0.85"/><path d="M8 0.6v14.8" stroke="#000" stroke-width="0.5" opacity="0.6"/></svg>
<div class="t" style="left:1026px;top:313.0px;font-size:16px;color:#fff">Connections</div>
<svg style="left:1003px;top:346px" width="17" height="16" viewBox="0 0 17 16" preserveAspectRatio="none"><rect x="0" y="0" width="17" height="16" fill="#000"/><rect x="3" y="3.5" width="2.2" height="12.5" fill="#fff"/><rect x="7.4" y="7" width="2.2" height="9" fill="#fff"/><rect x="11.8" y="2.3" width="2.2" height="13.7" fill="#fff"/></svg>
<div class="t" style="left:1026px;top:347.0px;font-size:16px;color:#333;transform:scaleX(0.9841);transform-origin:0 0">Process Manager</div>
<svg style="left:1004px;top:384px" width="13" height="13" viewBox="0 0 13 13" preserveAspectRatio="none"><circle cx="6.5" cy="6.5" r="4.6" fill="none" stroke="#000" stroke-width="1.3"/><circle cx="6.5" cy="6.5" r="1" fill="#000"/><path d="M6.5 0v2M6.5 11v2M0 6.5h2M11 6.5h2M1.9 1.9l1.4 1.4M9.7 9.7l1.4 1.4M1.9 11.1l1.4-1.4M9.7 3.3l1.4-1.4" stroke="#000" stroke-width="1.4"/></svg>
<div class="t" style="left:1026px;top:381.0px;font-size:16px;color:#333;transform:scaleX(0.9420);transform-origin:0 0">Services</div>
<svg style="left:1004px;top:416px" width="16" height="16" viewBox="0 0 16 16" preserveAspectRatio="none"><path d="M15.6 0.4C12 0.2 8.5 2 6.2 5.2L4.5 8.2 7.8 11.5 10.8 9.8C14 7.5 15.8 4 15.6 0.4z" fill="#000"/><circle cx="11.4" cy="4.6" r="1.5" fill="#fff"/><path d="M5.5 4.2L1.5 5 0.2 7.3 4 7.6zM11.8 10.5L11 14.5 8.7 15.8 8.4 12z" fill="#000"/><path d="M3.6 9.8C2 10.8 1 12.8 0.6 15.4 3.2 15 5.2 14 6.2 12.4z" fill="#000"/><path d="M2.8 11.6l1.6 1.6" stroke="#fff" stroke-width="0.8"/></svg>
<div class="t" style="left:1026px;top:415.0px;font-size:16px;color:#333;transform:scaleX(1.0118);transform-origin:0 0">Startup</div>
<svg style="left:1004px;top:449px" width="16" height="16" viewBox="0 0 16 16" preserveAspectRatio="none"><rect x="0" y="5.2" width="16" height="11" rx="0.6" fill="#000"/><rect x="5.8" y="5.2" width="1.3" height="11" fill="#fff"/><rect x="8" y="11.4" width="7" height="3.6" fill="#fff"/><path d="M6.4 5C5 3.8 2.8 2.6 2.6 1.2 2.5.2 3.6 0 4.4.7 5.4 1.6 6 3.4 6.4 5zM6.4 5C7 3.4 7.8 1.4 8.8.6 9.8-.1 10.9.4 10.7 1.6 10.4 3 8.2 4 6.4 5z" fill="none" stroke="#000" stroke-width="0.95"/></svg>
<div class="t" style="left:1026px;top:449.0px;font-size:16px;color:#333">Installed Software</div>
<svg style="left:1003px;top:482px" width="18" height="16" viewBox="0 0 18 16" preserveAspectRatio="none"><path d="M0.5 2.5h12.5V16H0.5z" fill="#000"/><path d="M3.7 0.3v3.6M8.2 0.3v3.6" stroke="#fff" stroke-width="2.2"/><path d="M3.7 0v3.4M8.2 0v3.4" stroke="#000" stroke-width="0.9"/><path d="M16 1.2L18.6 3.8 9.6 12.8 5.6 14.6 7.4 10.6z" fill="#000" stroke="#fff" stroke-width="1.1"/><path d="M14.2 3.2l2.4 2.4" stroke="#fff" stroke-width="0.9"/><path d="M7.6 11.2L9 12.6" stroke="#fff" stroke-width="1.5"/></svg>
<div class="t" style="left:1026px;top:483.0px;font-size:16px;color:#333">Registry Editor</div>
<svg style="left:1003px;top:518px" width="18" height="13" viewBox="0 0 18 13" preserveAspectRatio="none"><rect x="0" y="0" width="18" height="10" fill="#000"/><rect x="8" y="10" width="2" height="2" fill="#000"/><rect x="3.5" y="11.8" width="11" height="1.2" fill="#777"/></svg>
<div class="t" style="left:1026px;top:517.0px;font-size:16px;color:#333;transform:scaleX(1.0322);transform-origin:0 0">Active Window</div>
<svg style="left:1004px;top:550px" width="17" height="18" viewBox="0 0 17 18" preserveAspectRatio="none"><rect x="0" y="0" width="17" height="18" fill="#000"/><rect x="1.3" y="4.5" width="14.4" height="12.2" fill="#fff"/><path d="M1.3 7.3h14.4M1.3 10.1h14.4M1.3 12.9h14.4M4.1 4.5v12.2M7 4.5v12.2M10 4.5v12.2M12.9 4.5v12.2" stroke="#000" stroke-width="1.1"/><rect x="12.9" y="12.9" width="2.8" height="3.8" fill="#fff"/></svg>
<div class="t" style="left:1026px;top:551.0px;font-size:16px;color:#333;transform:scaleX(0.9818);transform-origin:0 0">Task Scheduler</div>
<svg style="left:1004px;top:585px" width="16" height="16" viewBox="0 0 16 16" preserveAspectRatio="none"><circle cx="8" cy="8" r="7.4" fill="none" stroke="#000" stroke-width="1.2"/><path d="M3.2 2C6 -.2 11.3 .2 14 3.3L15 6.2 13.2 6.8 11.6 5.4 9.4 4.6 5.6 3.8 4 3.4z" fill="#000"/><path d="M3.4 6.2L6 5.2 10 5.7 11.6 7.4 11.2 9.5 10 10.9 9 13.6 8 14.2 7.6 11.6 7 9.6 5 9.1 3.3 8.2z" fill="#000"/></svg>
<div class="t" style="left:1026px;top:585.0px;font-size:16px;color:#333">Environment Variables</div>
<svg style="left:1003px;top:620px" width="18" height="15" viewBox="0 0 18 15" preserveAspectRatio="none"><rect x="0" y="6.2" width="11" height="8.8" rx="1" fill="#000"/><path d="M2.5 6.2V3.8a3 3 0 0 1 6 0v2.4" stroke="#000" stroke-width="1.8" fill="none"/><circle cx="14.8" cy="3.6" r="3.1" fill="#000"/><path d="M12.8 2.8h4" stroke="#fff" stroke-width="1"/><rect x="14" y="6" width="1.6" height="9" fill="#000"/></svg>
<div class="t" style="left:1026px;top:619.0px;font-size:16px;color:#333;transform:scaleX(0.9875);transform-origin:0 0">Persistence Manager</div>
<svg style="left:1003px;top:655px" width="18" height="14" viewBox="0 0 18 14" preserveAspectRatio="none"><path d="M0 2C3 0 7 0 10.5 1.5L9.5 3C9 8 8 11.5 5.5 12.5 3 11.5 1.2 8 0.7 3.5z" fill="#000"/><path d="M8 4.2C11 2.6 15 2.6 17.8 4.3L17 5.5C16.6 10 15 13 12.7 14 10.3 13 9 10 8.7 5.7z" fill="#000"/><path d="M2.2 4.6h2.3M6.3 4.6h2.2" stroke="#fff" stroke-width="0.9"/><path d="M3 8.5c1.5 1.5 3.5 1.5 5 0" stroke="#fff" stroke-width="0.9" fill="none"/><path d="M10.5 7h2M14 7h2" stroke="#fff" stroke-width="0.9"/><path d="M11 11.5c1-1.2 2.5-1.2 3.5 0" stroke="#fff" stroke-width="0.9" fill="none"/></svg>
<div class="t" style="left:1026px;top:653.0px;font-size:16px;color:#333;transform:scaleX(1.0281);transform-origin:0 0">Token Impersonation</div>
<svg style="left:1004px;top:686px" width="15" height="19" viewBox="0 0 15 19" preserveAspectRatio="none"><rect x="0" y="2.5" width="15" height="16.5" rx="1.5" fill="#000"/><path d="M4 4V2a2 2 0 0 1 2-2h3a2 2 0 0 1 2 2v2z" fill="#000"/><rect x="5.3" y="1.2" width="4.4" height="2.3" rx="1" fill="#fff"/></svg>
<div class="t" style="left:1026px;top:687.0px;font-size:16px;color:#333;transform:scaleX(0.9811);transform-origin:0 0">Event Log</div>
</div></body></html>
